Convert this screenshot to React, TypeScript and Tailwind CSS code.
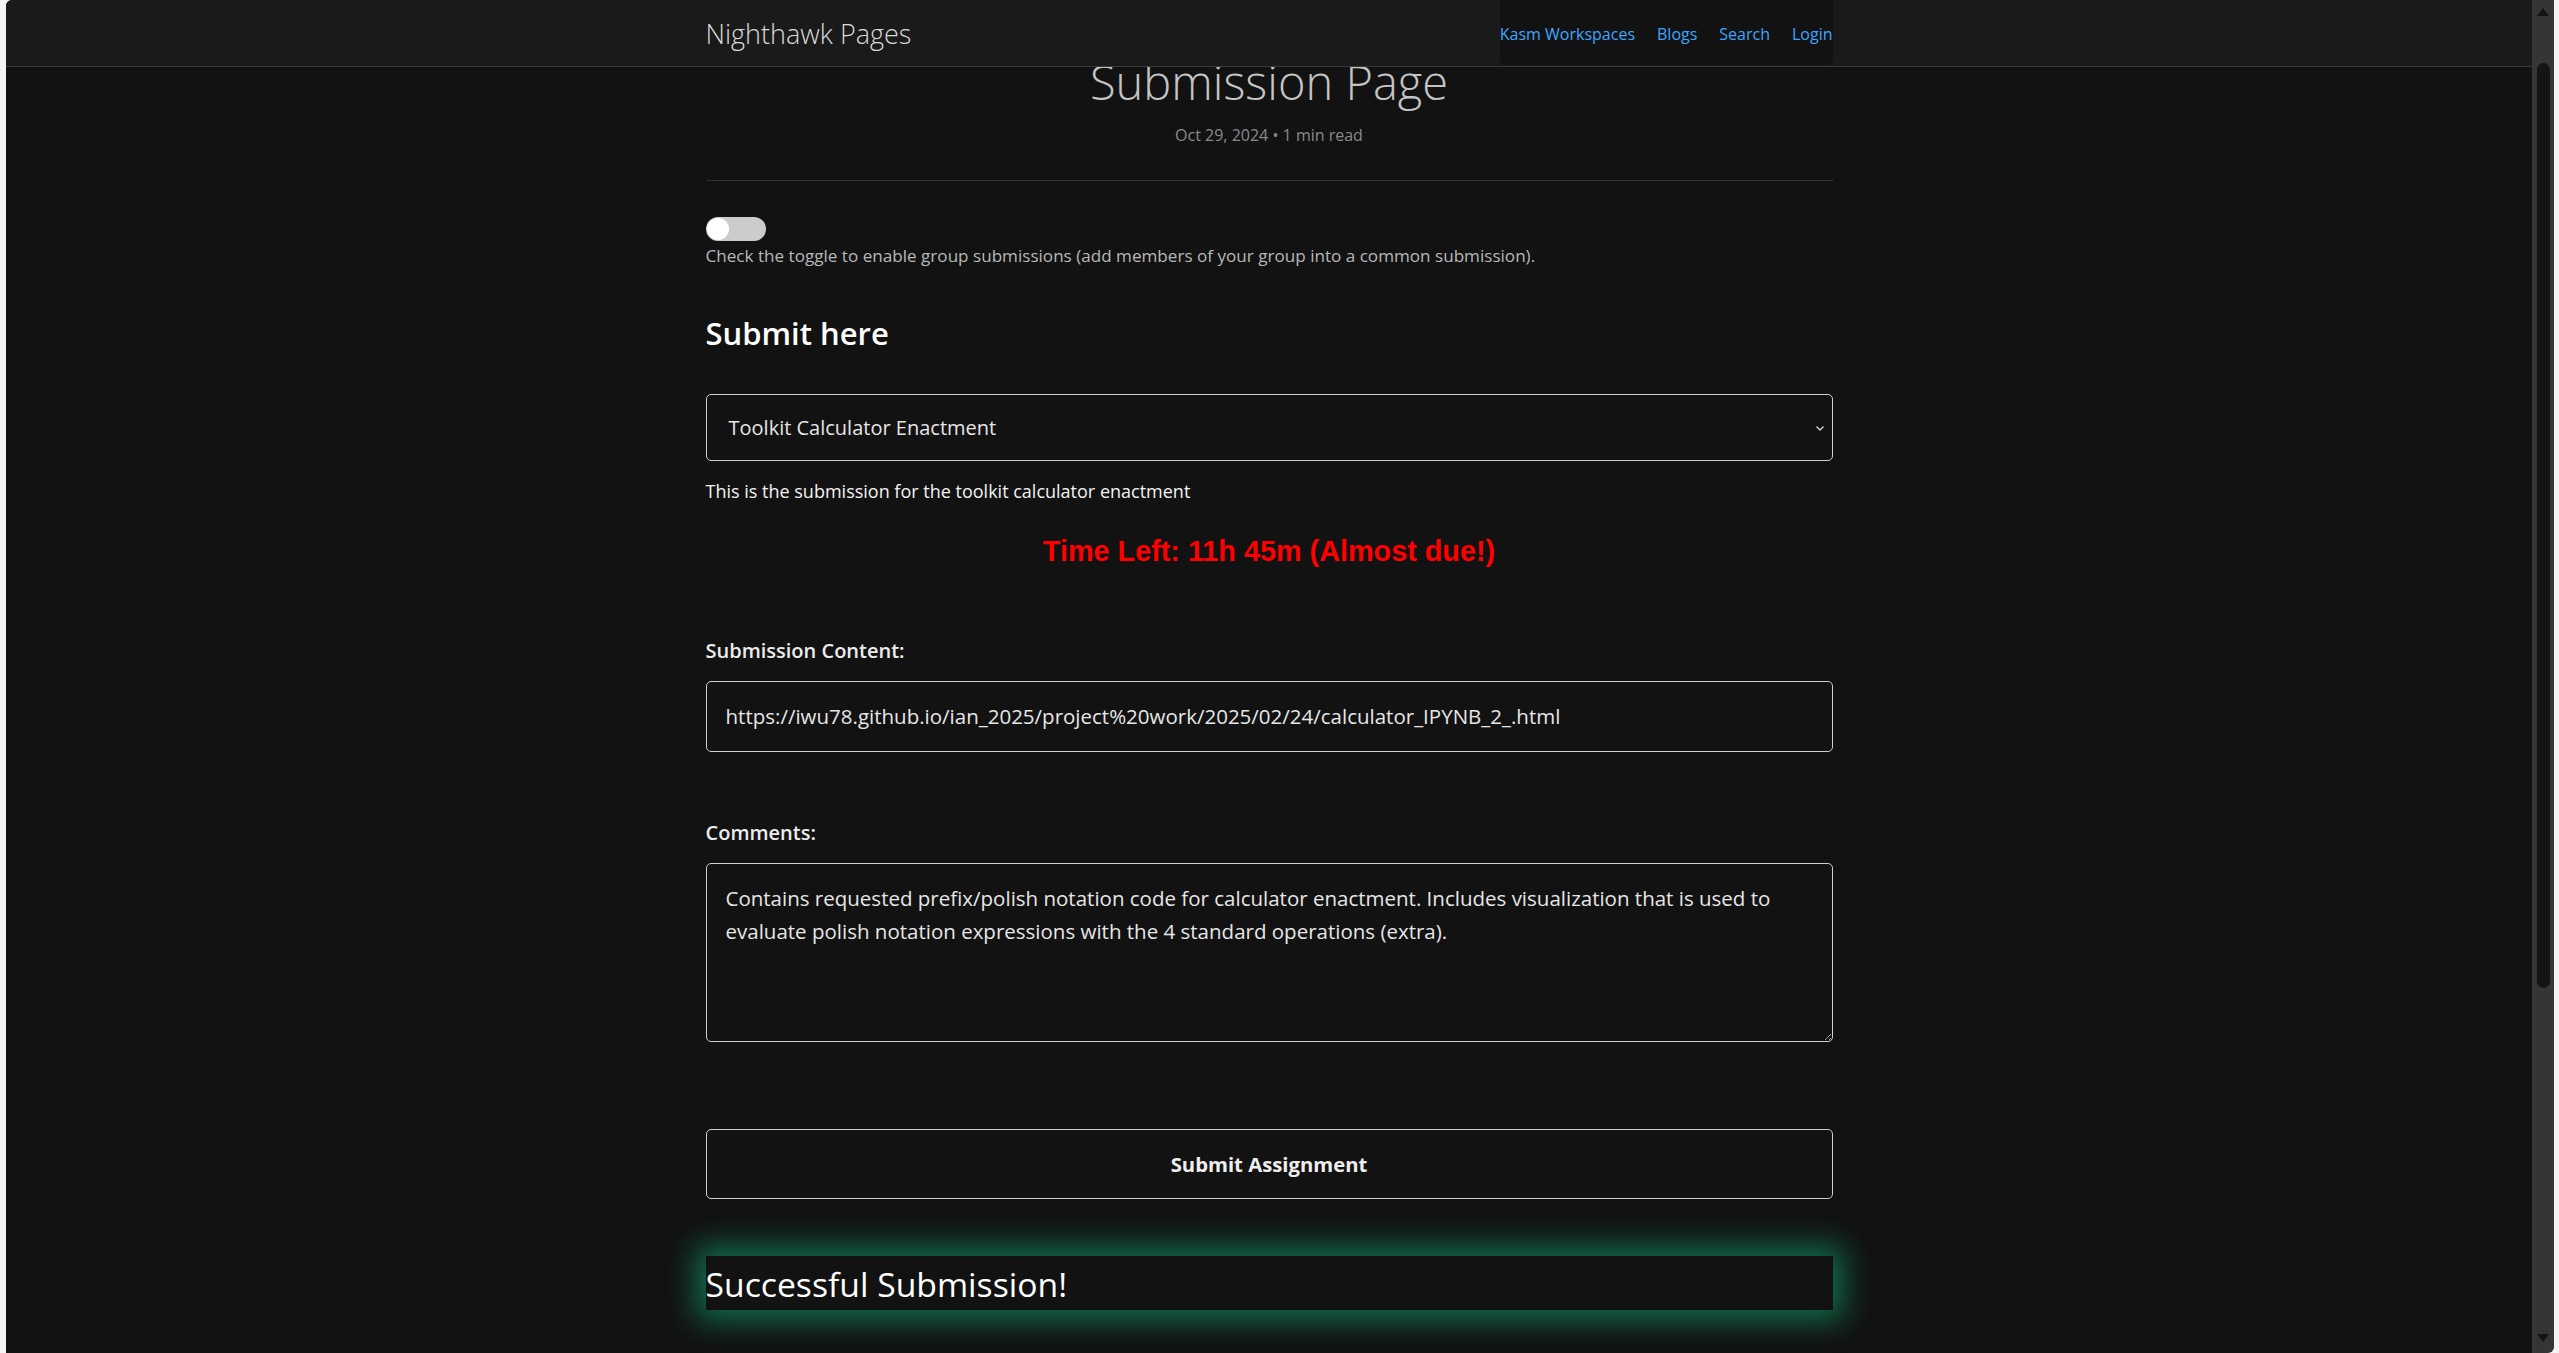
import React from "react";

const sans = "font-['Open_Sans','Noto_Sans',sans-serif]";

export default function App() {
  return (
    <div className={`flex h-[1353px] w-[2559px] overflow-hidden bg-[#f4f4f4] ${sans}`}>
      <div className="w-[6px] shrink-0 bg-[#f4f4f4]" />
      <div className="flex w-[2526px] shrink-0 flex-col overflow-hidden rounded-tl-[6px] bg-[#121212]">
        <header className="relative z-10 h-[67px] shrink-0 border-b border-[#3a3a3a] bg-[#1a1a1a]">
          <div className="mx-auto flex h-[66px] w-[1127px] items-center justify-between">
            <div className="text-[27px] font-light leading-none text-[#d8d8d8]">Nighthawk Pages</div>
            <nav className="flex h-[65px] items-center gap-[22px] self-start rounded-b-[6px] bg-[#121212] pt-[2px] text-[16px] text-[#3ea6ff]">
              <span>Kasm Workspaces</span>
              <span>Blogs</span>
              <span>Search</span>
              <span>Login</span>
            </nav>
          </div>
        </header>

        <main className="mx-auto flex w-[1127px] flex-col">
          <h1 className="mt-[-9px] text-center text-[47px] font-light leading-[48px] text-[#c4c4c4]">
            Submission Page
          </h1>
          <div className="mt-[19px] text-center text-[16px] leading-[20px] text-[#8a8a8a]">
            Oct 29, 2024 • 1 min read
          </div>
          <div className="mt-[35px] border-t border-[#333333]" />

          <div className="mt-[36px] flex h-[24px] w-[60px] items-center rounded-full bg-[#cccccc]">
            <div className="ml-[1px] h-[22px] w-[22px] rounded-full bg-white" />
          </div>
          <p className="mt-[5px] text-[17.1px] leading-[20px] text-[#b8b8b8]">
            Check the toggle to enable group submissions (add members of your group into a common submission).
          </p>

          <h2 className="mt-[47px] text-[31px] font-semibold leading-[40px] text-white">Submit here</h2>

          <div className="mt-[41px] flex h-[67px] items-center justify-between rounded-[5px] border border-[#cfcfcf] pl-[22px] pr-[7px]">
            <span className="text-[20px] text-[#e6e6e6]">Toolkit Calculator Enactment</span>
            <svg width="10" height="8" viewBox="0 0 10 8">
              <path d="M1.5 2.5 L5 6 L8.5 2.5" fill="none" stroke="#d0d0d0" strokeWidth="1.4" />
            </svg>
          </div>

          <p className="mt-[20px] text-[18px] leading-[20px] text-[#f2f2f2]">
            This is the submission for the toolkit calculator enactment
          </p>

          <div className="mt-[35px] text-center font-['Liberation_Sans',Arial,sans-serif] text-[28.8px] font-bold leading-[30px] text-[#ff0000]">
            Time Left: 11h 45m (Almost due!)
          </div>

          <label className="mt-[73px] text-[20px] font-semibold leading-[24px] text-[#ececec]">
            Submission Content:
          </label>
          <div className="mt-[18px] flex h-[71px] items-center rounded-[5px] border border-[#cfcfcf] pl-[19px] text-[20.5px] text-[#e6e6e6]">
            https://iwu78.github.io/ian_2025/project%20work/2025/02/24/calculator_IPYNB_2_.html
          </div>

          <label className="mt-[69px] text-[20px] font-semibold leading-[24px] text-[#ececec]">Comments:</label>
          <textarea
            readOnly
            defaultValue="Contains requested prefix/polish notation code for calculator enactment. Includes visualization that is used to evaluate polish notation expressions with the 4 standard operations (extra)."
            className="mt-[18px] h-[179px] w-full rounded-[5px] border border-[#cfcfcf] bg-[#121212] pl-[19px] pr-[30px] pt-[18px] text-[20.5px] leading-[33px] text-[#e6e6e6] outline-none"
          />

          <button className="mt-[87px] flex h-[70px] items-center justify-center rounded-[5px] border border-[#cfcfcf] bg-transparent text-[20.3px] font-bold text-[#eeeeee]">
            Submit Assignment
          </button>

          <div className="mt-[57px] flex h-[54px] items-center bg-[#121212] pt-[4px] text-[33.7px] leading-none text-white shadow-[0_0_30px_10px_rgba(16,150,100,0.7)]">
            Successful Submission!
          </div>
        </main>
      </div>

      <div className="relative flex w-[22px] shrink-0 flex-col items-center rounded-br-[6px] bg-[#353535]">
        <svg width="14" height="10" viewBox="0 0 14 10" className="mt-[7px]">
          <path d="M7 1 L13 9 L1 9 Z" fill="#141414" />
        </svg>
        <div className="mt-[46px] h-[925px] w-[13px] rounded-full bg-[#141414]" />
        <div className="flex-1" />
        <svg width="14" height="10" viewBox="0 0 14 10" className="mb-[10px]">
          <path d="M1 1 L13 1 L7 9 Z" fill="#141414" />
        </svg>
      </div>
      <div className="w-[5px] shrink-0 bg-[#f4f4f4]" />
    </div>
  );
}
